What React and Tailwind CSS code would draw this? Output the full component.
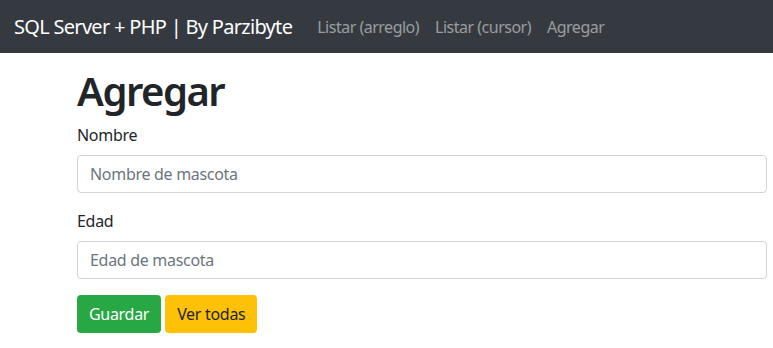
export default function App() {
  const links = ['Listar (arreglo)', 'Listar (cursor)', 'Agregar']

  return (
    <div className="min-h-screen bg-white text-[#212529] font-['Segoe_UI','Noto_Sans','Open_Sans',sans-serif]">
      <nav className="flex h-[53px] items-center bg-[#343a40] px-[14px]">
        <a href="#" className="mr-[25px] text-[20px] leading-[30px] tracking-[-0.7px] text-white">
          SQL Server + PHP | By Parzibyte
        </a>
        <div className="flex gap-[16px]">
          {links.map((l) => (
            <a key={l} href="#" className="text-[16px] leading-[24px] tracking-[-0.5px] text-white/50">
              {l}
            </a>
          ))}
        </div>
      </nav>

      <main className="ml-[77px] mt-[14px] w-[690px] tracking-[-0.3px]">
        <h1 className="mb-[8px] text-[40px] font-semibold leading-[48px] tracking-[-1.5px]">Agregar</h1>
        <form>
          <div className="mb-[16px]">
            <label className="mb-[8px] block text-[16px] leading-[24px]">Nombre</label>
            <input
              type="text"
              placeholder="Nombre de mascota"
              className="block h-[38px] w-full rounded-[4px] border border-[#ced4da] px-[12px] text-[16px] tracking-[-0.3px] placeholder:text-[#6c757d] outline-none"
            />
          </div>
          <div className="mb-[16px]">
            <label className="mb-[8px] block text-[16px] leading-[24px]">Edad</label>
            <input
              type="text"
              placeholder="Edad de mascota"
              className="block h-[38px] w-full rounded-[4px] border border-[#ced4da] px-[12px] text-[16px] tracking-[-0.3px] placeholder:text-[#6c757d] outline-none"
            />
          </div>
          <div className="flex gap-[4px]">
            <button
              type="button"
              className="h-[38px] rounded-[4px] bg-[#28a745] px-[12px] text-[16px] leading-[24px] tracking-[-0.3px] text-white"
            >
              Guardar
            </button>
            <a
              href="#"
              className="flex h-[38px] items-center rounded-[4px] bg-[#ffc107] px-[12px] text-[16px] leading-[24px] text-[#212529]"
            >
              Ver todas
            </a>
          </div>
        </form>
      </main>
    </div>
  )
}
